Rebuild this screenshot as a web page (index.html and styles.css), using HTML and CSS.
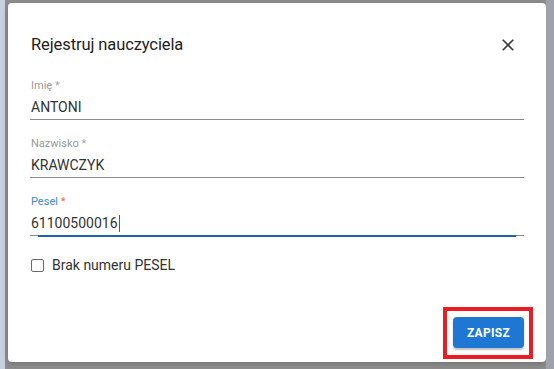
FILE: index.html
```html
<!DOCTYPE html>
<html lang="pl">
<head>
<meta charset="utf-8">
<title>Rejestruj nauczyciela</title>
<link rel="stylesheet" href="styles.css">
</head>
<body>
<div class="page">
  <div class="strip"></div>
  <div class="dialog">
    <div class="dialog-head">
      <h2 class="dialog-title">Rejestruj nauczyciela</h2>
      <button class="close-btn" aria-label="Zamknij">
        <svg width="12" height="12" viewBox="0 0 12 12"><path d="M0.7 0.7 L11.3 11.3 M11.3 0.7 L0.7 11.3" stroke="#3c3c3c" stroke-width="1.6" fill="none"/></svg>
      </button>
    </div>
    <div class="field">
      <div class="field-label">Imię <span class="req">*</span></div>
      <div class="field-value">ANTONI</div>
    </div>
    <div class="field">
      <div class="field-label">Nazwisko <span class="req">*</span></div>
      <div class="field-value">KRAWCZYK</div>
    </div>
    <div class="field field-focused">
      <div class="field-label">Pesel <span class="req">*</span></div>
      <div class="field-value">61100500016<span class="caret"></span></div>
      <div class="focus-bar"></div>
    </div>
    <label class="check-row">
      <span class="checkbox"></span>
      <span class="check-text">Brak numeru PESEL</span>
    </label>
    <div class="dialog-foot">
      <div class="highlight">
        <button class="save-btn">ZAPISZ</button>
      </div>
    </div>
  </div>
  <div class="side"></div>
</div>
</body>
</html>
```
FILE: styles.css
```css
html, body {
  margin: 0;
  padding: 0;
}
body {
  background: #8e8e8e;
  font-family: Roboto, "Liberation Sans", sans-serif;
  width: 554px;
  height: 369px;
  overflow: hidden;
}
.page {
  display: flex;
  height: 369px;
}
.strip {
  width: 5px;
  background: #c9d1df;
  flex: none;
}
.side {
  flex: 1;
  background: #9ea2a9;
}
.dialog {
  flex: none;
  width: 538px;
  height: 359px;
  margin: 3px 0 0 3px;
  background: #fff;
  border-radius: 4px;
  box-sizing: border-box;
  padding: 30px 22px 3px 22px;
  display: flex;
  flex-direction: column;
  box-shadow: 0 2px 6px rgba(0,0,0,0.2);
}
.dialog-head {
  display: flex;
  align-items: center;
  justify-content: space-between;
  height: 24px;
  margin-bottom: 22px;
}
.dialog-title {
  margin: 0;
  font-size: 16.5px;
  line-height: 24px;
  font-weight: 400;
  color: #222;
  padding-left: 1px;
  letter-spacing: -0.1px;
}
.close-btn {
  border: 0;
  background: none;
  padding: 0;
  margin: 0 10px 0 0;
  width: 12px;
  height: 12px;
  display: flex;
}
.field {
  position: relative;
  border-bottom: 1px solid #8a8a8a;
  margin-bottom: 17px;
  padding-bottom: 2px;
}
.field-label {
  font-size: 11px;
  line-height: 14px;
  color: #9a9a9a;
  margin-bottom: 4px;
  padding-left: 1px;
}
.field-value {
  font-size: 14px;
  line-height: 20px;
  color: #333;
  padding-left: 1px;
  display: flex;
  align-items: center;
}
.field-focused {
  margin-bottom: 19px;
}
.field-focused .field-label {
  color: #3d8ade;
}
.req {
  color: #a8a8a8;
}
.field-focused .req {
  color: #f06a50;
}
.caret {
  display: inline-block;
  width: 1px;
  height: 17px;
  background: #1a66c8;
  margin-left: 1px;
}
.focus-bar {
  position: absolute;
  left: 8px;
  right: 8px;
  bottom: -2px;
  height: 2px;
  background: #1b63b0;
}
.check-row {
  display: flex;
  align-items: center;
  height: 20px;
  font-size: 14px;
  line-height: 20px;
  color: #333;
}
.checkbox {
  width: 11px;
  height: 11px;
  border: 1.5px solid #6a6a6a;
  border-radius: 2px;
  margin: 0 8px 0 1px;
}
.dialog-foot {
  margin-top: auto;
  display: flex;
  justify-content: flex-end;
  margin-right: -9px;
}
.highlight {
  border: 4px solid #ec1c24;
  padding: 6px 5px 7px 6px;
  display: flex;
}
.save-btn {
  width: 71px;
  height: 31px;
  border: 0;
  border-radius: 4px;
  background: #1e78d3;
  color: #fff;
  font-family: Roboto, "Liberation Sans", sans-serif;
  font-weight: 700;
  font-size: 12px;
  letter-spacing: 0.3px;
  box-shadow: 0 2px 2px rgba(0,0,0,0.25);
}
```
